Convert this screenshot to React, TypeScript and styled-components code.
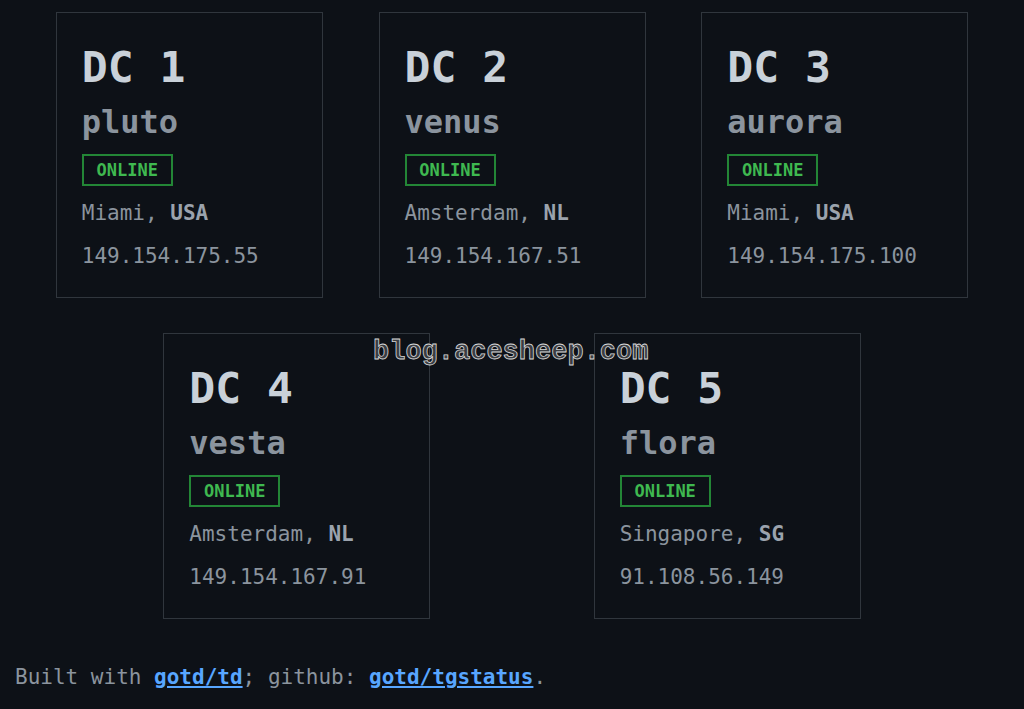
import * as React from "react"
import styled, { createGlobalStyle } from "styled-components"

const GlobalStyle = createGlobalStyle`
    html, body {
        margin: 0;
        padding: 0;
        background: #0d1117;
    }
    body {
        font-family: "DejaVu Sans Mono", "Liberation Mono", monospace;
        color: #8b949e;
    }
`;

const Page = styled.div`
    position: relative;
    width: 1024px;
    min-height: 709px;
    box-sizing: border-box;
    padding-top: 12px;
`;

const Grid = styled.div`
    display: flex;
    flex-wrap: wrap;
    justify-content: space-evenly;
    row-gap: 35px;
`;

const Card = styled.div`
    box-sizing: border-box;
    width: 267px;
    height: 286px;
    border: 1px solid #30363d;
    padding: 29px 25px 0;
`;

const Title = styled.h2`
    margin: 0;
    font-size: 43px;
    font-weight: bold;
    line-height: 50px;
    color: #c9d1d9;
`;

const Name = styled.h3`
    margin: 10px 0 0;
    font-size: 32px;
    font-weight: bold;
    line-height: 40px;
    color: #8b949e;
`;

const Badge = styled.div`
    display: inline-block;
    margin-top: 12px;
    box-sizing: border-box;
    width: 91px;
    height: 32px;
    border: 2px solid #238636;
    color: #3fb950;
    font-size: 17px;
    font-weight: bold;
    line-height: 28px;
    text-align: center;
`;

const Line = styled.div`
    margin-top: 12px;
    font-size: 21px;
    line-height: 30px;
    color: #8b949e;
    b {
        color: #9ba3ad;
    }
`;

const Address = styled(Line)`
    margin-top: 13px;
`;

const Footer = styled.p`
    margin: 0;
    padding: 43px 15px 0;
    font-size: 21px;
    line-height: 30px;
    color: #8b949e;
    a {
        color: #58a6ff;
        font-weight: bold;
        text-decoration: underline;
    }
`;

const Watermark = styled.div`
    position: absolute;
    left: 373px;
    top: 337px;
    font-family: "Liberation Mono", monospace;
    font-size: 27px;
    font-weight: bold;
    color: #3a3d42;
    -webkit-text-stroke: 0.8px #d8d8d8;
    pointer-events: none;
`;

type DC = {
    id: number
    name: string
    city: string
    country: string
    ip: string
}

const dcs: DC[] = [
    { id: 1, name: "pluto", city: "Miami", country: "USA", ip: "149.154.175.55" },
    { id: 2, name: "venus", city: "Amsterdam", country: "NL", ip: "149.154.167.51" },
    { id: 3, name: "aurora", city: "Miami", country: "USA", ip: "149.154.175.100" },
    { id: 4, name: "vesta", city: "Amsterdam", country: "NL", ip: "149.154.167.91" },
    { id: 5, name: "flora", city: "Singapore", country: "SG", ip: "91.108.56.149" },
];

const App = () => {
    return (
        <Page>
            <GlobalStyle />
            <Grid>
                {dcs.map(dc => (
                    <Card key={dc.id}>
                        <Title>DC {dc.id}</Title>
                        <Name>{dc.name}</Name>
                        <Badge>ONLINE</Badge>
                        <Line>{dc.city}, <b>{dc.country}</b></Line>
                        <Address>{dc.ip}</Address>
                    </Card>
                ))}
            </Grid>
            <Footer>
                Built with <a href="#">gotd/td</a>; github: <a href="#">gotd/tgstatus</a>.
            </Footer>
            <Watermark>blog.acesheep.com</Watermark>
        </Page>
    )
}

export default App;
